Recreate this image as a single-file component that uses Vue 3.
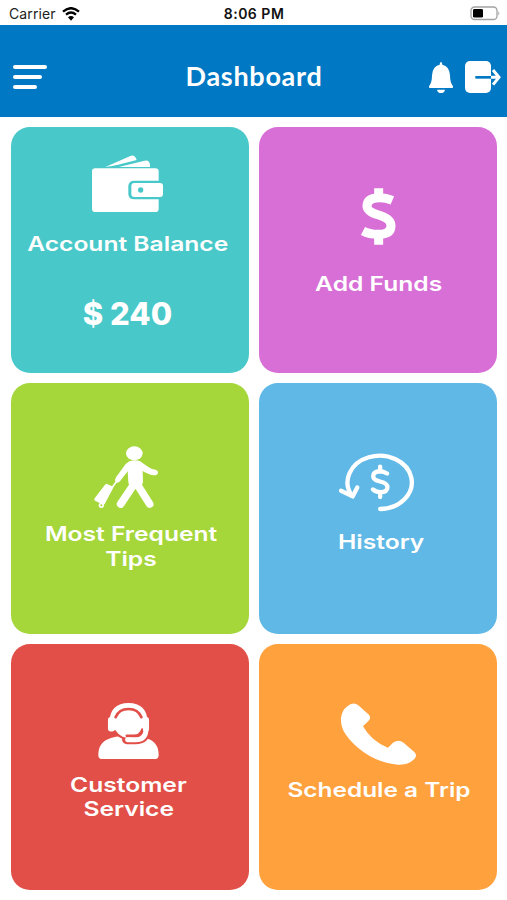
<template>
  <div class="screen">
    <!-- Status bar -->
    <div class="status-bar">
      <div class="status-left">
        <span class="carrier">Carrier</span>
        <svg class="wifi" viewBox="0 0 54 42">
          <path d="M3 14 Q27 -7 51 14" />
          <path d="M12 23 Q27 10 42 23" />
          <path class="wifi-dot" d="M18 31 Q27 23 36 31 L27 41Z" />
        </svg>
      </div>
      <span class="clock">8:06 PM</span>
      <div class="status-right">
        <svg class="battery" viewBox="0 0 30 15">
          <rect x="1" y="1" width="26" height="12.5" rx="3.6" fill="none" stroke="#a3a3a3" stroke-width="1.3" />
          <rect x="3" y="3" width="10" height="8.6" rx="1.4" />
          <path d="M28.4 5 q1.8 2.3 0 4.6Z" fill="#a3a3a3" />
        </svg>
      </div>
    </div>

    <!-- Header -->
    <header class="header">
      <button class="icon-button menu-button" aria-label="Menu">
        <span class="menu-line" />
        <span class="menu-line" />
        <span class="menu-line" />
      </button>
      <h1 class="title">Dashboard</h1>
      <div class="header-actions">
        <button class="icon-button" aria-label="Notifications">
          <svg class="bell" viewBox="0 0 72 93">
            <path d="M36 0 Q40 0 40 8 Q62 13 63 40 Q63 62 72 73 Q73 78 67 78 H5 Q-1 78 0 73 Q9 62 9 40 Q10 13 32 8 Q32 0 36 0Z" />
            <path d="M24 83 H48 Q46 93 36 93 Q26 93 24 83Z" />
          </svg>
        </button>
        <button class="icon-button" aria-label="Log out">
          <svg class="logout" viewBox="0 0 108 96">
            <rect width="78" height="96" rx="15" />
            <path class="cut" d="M31 49 H78" />
            <path class="arrow" d="M78 49 H101 M84 27 L102 49 L84 71" />
          </svg>
        </button>
      </div>
    </header>

    <!-- Tiles -->
    <main class="tiles">
      <section v-for="tile in tiles" :key="tile.id" class="tile" :class="tile.id">
        <svg v-if="tile.id === 'balance'" class="icon" viewBox="0 0 213 171">
          <path d="M40 36 L115 3 Q128 -2 134 15 L84 28 Q60 34 40 36Z" />
          <path d="M80 36 L158 17 Q172 14 174 30 V36Z" />
          <rect y="40" width="200" height="131" rx="10" />
          <path class="cut" d="M213 77 H127 Q109 77 109 94 V116 Q109 133 127 133 H213Z" />
          <rect x="118" y="84" width="95" height="42" rx="9" />
          <circle class="cut" cx="146" cy="105" r="8" />
        </svg>

        <svg v-else-if="tile.id === 'funds'" class="icon" viewBox="0 0 102 171">
          <path class="coin" d="M91 37 Q72 29 54 29 Q15 29 15 54 Q15 71 50 81 Q87 92 87 113 Q87 139 48 139 Q22 139 3 129" />
          <path class="coin" d="M50 1 V24 M50 145 V170" />
        </svg>

        <svg v-else-if="tile.id === 'trips'" class="icon" viewBox="0 0 192 186">
          <ellipse cx="121" cy="22" rx="25" ry="21" />
          <path d="M106 46 Q121 40 137 45 L163 63 Q174 71 185 71 Q193 74 192 81 Q190 88 180 88 Q166 87 146 75 L147 108 Q146 123 124 123 Q102 121 103 108 L101 76 L78 106 Q70 114 65 107 Q61 102 66 94 L89 62 Q96 52 106 46Z" />
          <path class="leg" d="M119 116 L80 174 M129 114 L167 174" />
          <path class="handle" d="M70 103 L51 130" />
          <path d="M33 116 Q36 112 41 115 L54 121 Q59 124 56 129 L32 174 Q29 178 25 175 L3 164 Q-1 162 2 157Z" />
          <circle cx="22" cy="178" r="8" />
          <circle class="cut" cx="22" cy="178" r="3" />
        </svg>

        <svg v-else-if="tile.id === 'history'" class="icon" viewBox="0 0 229 175">
          <path class="ring" d="M124 169 A97 80.5 0 1 0 38 128" />
          <path class="ring" d="M6 114 L41 131 L55 104" />
          <path class="ring" d="M145 62 Q134 55 124 55 Q103 56 103 70 Q103 81 124 86 Q146 91 146 103 Q146 118 124 118 Q111 118 102 110" />
          <path class="ring" d="M124 41 V54 M124 120 V133" />
        </svg>

        <svg v-else-if="tile.id === 'service'" class="icon" viewBox="0 0 182 169">
          <path d="M0 158 Q-1 118 38 106 Q60 98 91 98 Q122 98 144 106 Q183 118 182 158 Q182 169 172 169 H10 Q0 169 0 158Z" />
          <circle class="cut" cx="90" cy="61" r="50" />
          <path class="mic-gap" d="M144 80 Q143 110 112 110 H86" />
          <circle cx="90" cy="62" r="43" />
          <path d="M33 58 Q36 0 91 0 Q146 0 149 58Z" />
          <path class="gap" d="M52 43 Q62 18 91 18 Q120 18 130 43" />
          <path class="gap" d="M133 82 Q130 99 106 99 H86" />
          <rect x="29" y="42" width="21" height="44" rx="9" />
          <rect x="39" y="48" width="14" height="34" />
          <rect x="127" y="50" width="14" height="26" />
          <rect x="134" y="42" width="19" height="44" rx="9" />
          <path class="mic" d="M144 80 Q143 111 112 111 H88" />
        </svg>

        <svg v-else class="icon" viewBox="0 0 225 185">
          <path d="M18 10 Q36 -6 52 6 L83 34 Q92 44 83 53 L66 69 Q90 112 141 134 L156 119 Q171 107 186 117 L219 146 Q230 156 221 167 Q200 189 165 184 Q82 173 25 108 Q-3 76 0 44 Q3 21 18 10Z" />
        </svg>

        <h2 class="label">
          <span v-for="line in tile.lines" :key="line" class="label-line">{{ line }}</span>
        </h2>
        <p v-if="tile.amount" class="amount">{{ tile.amount }}</p>
      </section>
    </main>
  </div>
</template>

<script setup>
import { ref } from 'vue'

const tiles = ref([
  { id: 'balance', lines: ['Account Balance'], amount: '$ 240' },
  { id: 'funds', lines: ['Add Funds'] },
  { id: 'trips', lines: ['Most Frequent', 'Tips'] },
  { id: 'history', lines: ['History'] },
  { id: 'service', lines: ['Customer', 'Service'] },
  { id: 'schedule', lines: ['Schedule a Trip'] }
])
</script>

<style>
body {
  margin: 0;
  background: #fff;
}
</style>

<style scoped>
.screen {
  width: 507px;
  height: 900px;
  overflow: hidden;
  background: #fff;
  font-family: Inter, 'Liberation Sans', sans-serif;
}

/* Status bar */
.status-bar {
  display: grid;
  grid-template-columns: 1fr auto 1fr;
  align-items: center;
  height: 25px;
  padding: 2px 7px 0 9px;
  box-sizing: border-box;
  font-size: 14px;
  color: #222;
}

.status-left {
  display: flex;
  align-items: center;
  gap: 6px;
}

.carrier {
  letter-spacing: 0.1px;
}

.status-right {
  display: flex;
  justify-content: flex-end;
}

.wifi {
  width: 18px;
  height: 14px;
  fill: none;
  stroke: #000;
  stroke-width: 7;
}

.wifi-dot {
  fill: #000;
  stroke: none;
}

.clock {
  margin-right: 1px;
  font-weight: 600;
  letter-spacing: 0.5px;
  color: #111;
}

.battery {
  width: 30px;
  height: 15px;
}

/* Header */
.header {
  display: grid;
  grid-template-columns: 1fr auto 1fr;
  align-items: center;
  height: 92px;
  padding: 12px 6px 0 13px;
  box-sizing: border-box;
  background: #0078c3;
}

.icon-button {
  display: flex;
  padding: 0;
  border: 0;
  background: none;
}

.menu-button {
  flex-direction: column;
  gap: 6px;
}

.menu-line {
  width: 34px;
  height: 4.3px;
  border-radius: 2px;
  background: #fff;
}

.menu-line:nth-child(2) {
  width: 29px;
}

.menu-line:nth-child(3) {
  width: 24px;
}

.title {
  margin: 0 6px 2px 0;
  font-family: Lato, sans-serif;
  font-size: 27px;
  font-weight: 700;
  line-height: 32px;
  letter-spacing: 0.7px;
  color: #fff;
}

.header-actions {
  display: flex;
  align-items: center;
  justify-content: flex-end;
  gap: 12px;
}

.bell {
  width: 24px;
  height: 31px;
  fill: #fff;
}

.logout {
  width: 36px;
  height: 32px;
  fill: #fff;
}

.logout .cut {
  stroke: #0078c3;
  stroke-width: 8;
}

.logout .arrow {
  fill: none;
  stroke: #fff;
  stroke-width: 9;
}

/* Tiles */
.tiles {
  display: grid;
  grid-template-columns: 238px 238px;
  grid-template-rows: 246px 251px 246px;
  gap: 10px;
  padding: 10px 10px 10px 11px;
}

.tile {
  display: flex;
  flex-direction: column;
  align-items: center;
  box-sizing: border-box;
  border-radius: 19px;
  color: #fff;
  background: var(--tile);
}

.icon {
  flex: none;
  overflow: visible;
  fill: #fff;
}

.icon .cut {
  fill: var(--tile);
}

.label {
  display: flex;
  flex-direction: column;
  align-items: center;
  margin: 0;
  font-size: 20px;
  font-weight: 600;
  line-height: 24.5px;
  white-space: nowrap;
}

.label-line {
  transform: scaleX(1.23);
}

.amount {
  margin: 38px 0 0;
  font-size: 31px;
  font-weight: 800;
  line-height: 40px;
}

.balance {
  --tile: #49c8c9;
  padding: 28px 5px 0 0;
}

.balance .icon {
  width: 71px;
  height: 57px;
  margin-bottom: 19.5px;
}

.funds {
  --tile: #d86fd6;
  padding: 61px 0 0 2px;
}

.funds .icon {
  width: 34px;
  height: 57px;
  margin-bottom: 26.5px;
}

.coin {
  fill: none;
  stroke: #fff;
  stroke-width: 27;
}

.trips {
  --tile: #a5d63a;
  padding: 63px 0 0 2px;
}

.trips .icon {
  width: 64px;
  height: 62px;
  margin: 0 10px 14px 0;
}

.leg,
.handle {
  stroke: #fff;
  stroke-width: 23;
  stroke-linecap: round;
}

.handle {
  stroke-width: 5;
}

.history {
  --tile: #5fb8e6;
  padding: 70px 0 0 6px;
}

.history .icon {
  width: 76px;
  height: 58px;
  margin: 0 9px 19px 0;
}

.ring {
  fill: none;
  stroke: #fff;
  stroke-width: 13;
  stroke-linecap: round;
  stroke-linejoin: round;
}

.service {
  --tile: #e14f48;
  padding: 58.5px 3px 0 0;
}

.service .icon {
  width: 61px;
  height: 56px;
  margin-bottom: 14px;
}

.mic,
.gap,
.mic-gap {
  fill: none;
  stroke: #fff;
  stroke-width: 15;
  stroke-linecap: round;
}

.gap,
.mic-gap {
  stroke: var(--tile);
}

.gap {
  stroke-width: 8;
}

.mic-gap {
  stroke-width: 29;
}

.schedule {
  --tile: #ffa13d;
  padding: 59px 0 0 1px;
}

.schedule .icon {
  width: 75px;
  height: 62px;
  margin-bottom: 13px;
}

.schedule .label-line {
  transform: scaleX(1.22);
}
</style>
